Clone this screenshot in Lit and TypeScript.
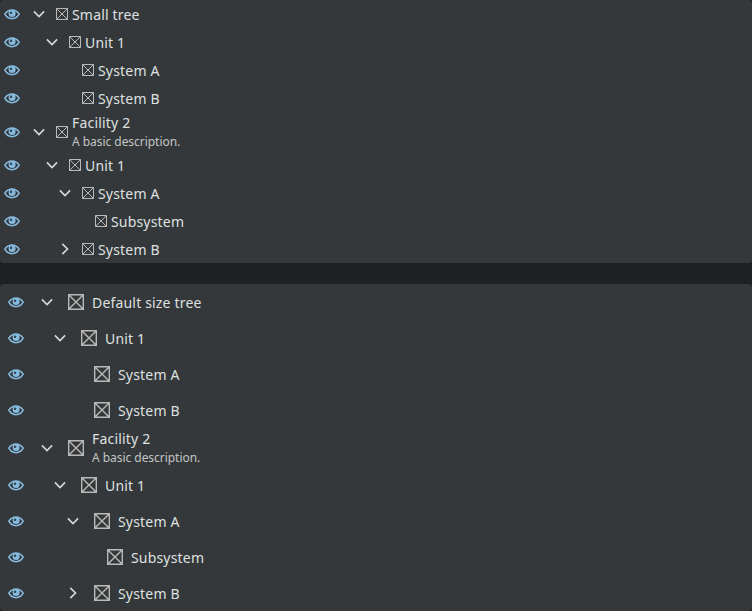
import { LitElement, html, css, svg, nothing } from "lit";
import { customElement, property } from "lit/decorators.js";

interface Node {
  label: string;
  depth: number;
  description?: string;
  state?: "open" | "closed";
}

const nodes = (title: string): Node[] => [
  { label: title, depth: 0, state: "open" },
  { label: "Unit 1", depth: 1, state: "open" },
  { label: "System A", depth: 2 },
  { label: "System B", depth: 2 },
  { label: "Facility 2", depth: 0, state: "open", description: "A basic description." },
  { label: "Unit 1", depth: 1, state: "open" },
  { label: "System A", depth: 2, state: "open" },
  { label: "Subsystem", depth: 3 },
  { label: "System B", depth: 2, state: "closed" },
];

const eye = html`<svg class="eye" width="16" height="12" viewBox="0 0 16 12">
  <path d="M.8 6.200C2.600 3.300 5 1.900 8 1.900s5.400 1.400 7.200 4.300C13.400 9.300 11 10.700 8 10.700S2.600 9.300.8 6.200Z" fill="none" stroke="#86bbdf" stroke-width="1.500"/>
  <circle cx="8.100" cy="5.500" r="3.500" fill="#86bbdf"/>
  <path d="M5.800 5.300a2.300 2.300 0 0 1 1.500-2.100q.1 1.300 1.200 1.500a1.500 1.500 0 0 1-2.700.6Z" fill="#2c3a44"/>
</svg>`;

const chevron = (state: string) => html`<svg width="12" height="12" viewBox="0 0 12 12">
  ${svg`<path d=${state === "open" ? "M.9 3.300 6 8.500l5.100-5.200" : "M3.300.9 8.500 6l-5.200 5.100"} fill="none" stroke="#d4d4d4" stroke-width="1.700"/>`}
</svg>`;

@customElement("tree-view")
export class TreeView extends LitElement {
  @property() heading = "";
  @property({ reflect: true }) size = "default";

  static styles = css`
    :host {
      --row: 36px;
      --edge: 8px;
      --gap: 15px;
      --icon: 16px;
      --label-gap: 8px;
      display: block;
      overflow: hidden;
      border-radius: 4px;
      background: #34383a;
    }
    :host([size="small"]) {
      --row: 28px;
      --edge: 4px;
      --gap: 11px;
      --icon: 12px;
      --label-gap: 4px;
    }
    .row {
      display: flex;
      align-items: center;
      height: var(--row);
      padding-left: var(--edge);
    }
    .row.tall { height: 39px; }
    svg { display: block; flex: none; }
    .indent { flex: none; }
    .toggle { flex: none; width: 12px; margin-right: var(--gap); }
    .eye { margin-right: 17px; }
    .box { width: var(--icon); height: var(--icon); margin-right: var(--label-gap); }
    :host([size="small"]) .toggle { margin-left: -4px; }
    .text {
      color: #dfe0e0;
      font: 14px/20px "Noto Sans", sans-serif;
      letter-spacing: 0.18px;
      white-space: nowrap;
      padding-top: 1px;
    }
    .description {
      color: #c3c5c5;
      font-size: 12px;
      line-height: 18px;
      letter-spacing: -0.04px;
    }
  `;

  private box() {
    const s = this.size === "small" ? 12 : 16;
    const w = s === 12 ? 1 : 1.4;
    const e = s - w / 2;
    return html`<svg class="box" viewBox="0 0 ${s} ${s}">
      <path d="M${w / 2} ${w / 2}H${e}V${e}H${w / 2}ZL${e} ${e}M${e} ${w / 2}L${w / 2} ${e}"
        fill="none" stroke="#bab9b7" stroke-width=${w} />
    </svg>`;
  }

  render() {
    return nodes(this.heading).map(
      (n) => html`<div class="row ${n.description ? "tall" : ""}">
        ${eye}
        <span class="indent" style="width:${n.depth * 13}px"></span>
        <span class="toggle">${n.state ? chevron(n.state) : nothing}</span>
        ${this.box()}
        <div class="text">
          ${n.label}
          ${n.description ? html`<div class="description">${n.description}</div>` : nothing}
        </div>
      </div>`
    );
  }
}

@customElement("app-root")
export class AppRoot extends LitElement {
  static styles = css`
    :host {
      display: flex;
      flex-direction: column;
      gap: 21px;
      height: 611px;
      background: #1f2021;
    }
  `;
  render() {
    return html`<tree-view size="small" heading="Small tree"></tree-view>
      <tree-view heading="Default size tree"></tree-view>`;
  }
}
